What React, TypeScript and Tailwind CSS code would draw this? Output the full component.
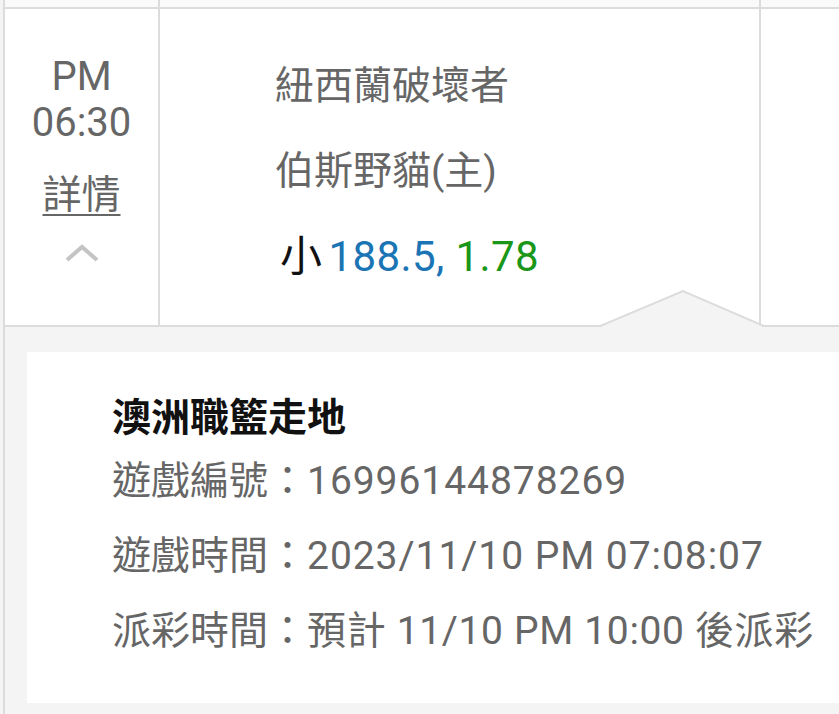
import React from "react";

export default function App() {
  return (
    <div className="relative w-[839px] h-[714px] overflow-hidden bg-[#f4f4f4] pl-[3px] font-['Roboto','Noto_Sans_CJK_TC',sans-serif]">
      <div className="flex h-full flex-col border-l-2 border-[#dcdcdc]">
        {/* remnant of previous row */}
        <div className="flex h-[9px] shrink-0 border-b-2 border-[#dcdcdc] bg-[#fafafa]">
          <div className="w-[155px] border-r-2 border-[#dcdcdc]" />
          <div className="w-[601px] border-r-2 border-[#dcdcdc]" />
          <div className="flex-1" />
        </div>

        {/* main row */}
        <div className="flex h-[318px] shrink-0 border-b-2 border-[#dcdcdc] bg-white">
          <div className="flex w-[155px] flex-col items-center border-r-2 border-[#dcdcdc] pt-[45px] text-[40px] text-[#666]">
            <div className="leading-[46px]">PM</div>
            <div className="leading-[46px]">06:30</div>
            <div className="mt-[26px] text-[39px] leading-[46px] underline decoration-2 underline-offset-[6px]">
              詳情
            </div>
            <svg className="mt-[25px]" width="36" height="20" viewBox="0 0 36 20">
              <polyline
                points="3,17 18,4 33,17"
                fill="none"
                stroke="#c4c4c4"
                strokeWidth="4"
              />
            </svg>
          </div>
          <div className="flex w-[601px] flex-col border-r-2 border-[#dcdcdc] pl-[115px] pt-[35px] text-[39px] text-[#666]">
            <div className="leading-[85px]">紐西蘭破壞者</div>
            <div className="leading-[85px]">伯斯野貓(主)</div>
            <div className="text-[42px] leading-[85px] tracking-[0.4px]">
              <span className="ml-[5px] text-[#111]">小</span>
              <span className="ml-[6px] text-[#1b75b5]">188.5,</span>{" "}
              <span className="text-[#1a9618]">1.78</span>
            </div>
          </div>
          <div className="flex-1" />
        </div>

        {/* detail panel */}
        <div className="flex flex-1 flex-col pl-[22px] pt-[25px] pb-[11px]">
          <div className="flex flex-1 flex-col bg-white pl-[85px] pt-[40px] text-[39px] text-[#666]">
            <div className="font-bold leading-[52px] text-[#111]">澳洲職籃走地</div>
            <div className="leading-[75px]">
              遊戲編號：<span className="tracking-[0.95px]">16996144878269</span>
            </div>
            <div className="leading-[75px]">
              遊戲時間：<span className="tracking-[0.95px]">2023/11/10 PM 07:08:07</span>
            </div>
            <div className="leading-[75px]">
              派彩時間：<span className="tracking-[0.65px]">預計 11/10 PM 10:00 後派彩</span>
            </div>
          </div>
        </div>
      </div>

      {/* notch pointer */}
      <svg
        className="absolute left-[600px] top-[289px]"
        width="164"
        height="42"
        viewBox="0 0 164 42"
      >
        <polygon points="2,37 83,2 162,37 162,42 2,42" fill="#f4f4f4" />
        <polyline points="0,37 83,2 164,37" fill="none" stroke="#dcdcdc" strokeWidth="2" />
      </svg>
    </div>
  );
}
